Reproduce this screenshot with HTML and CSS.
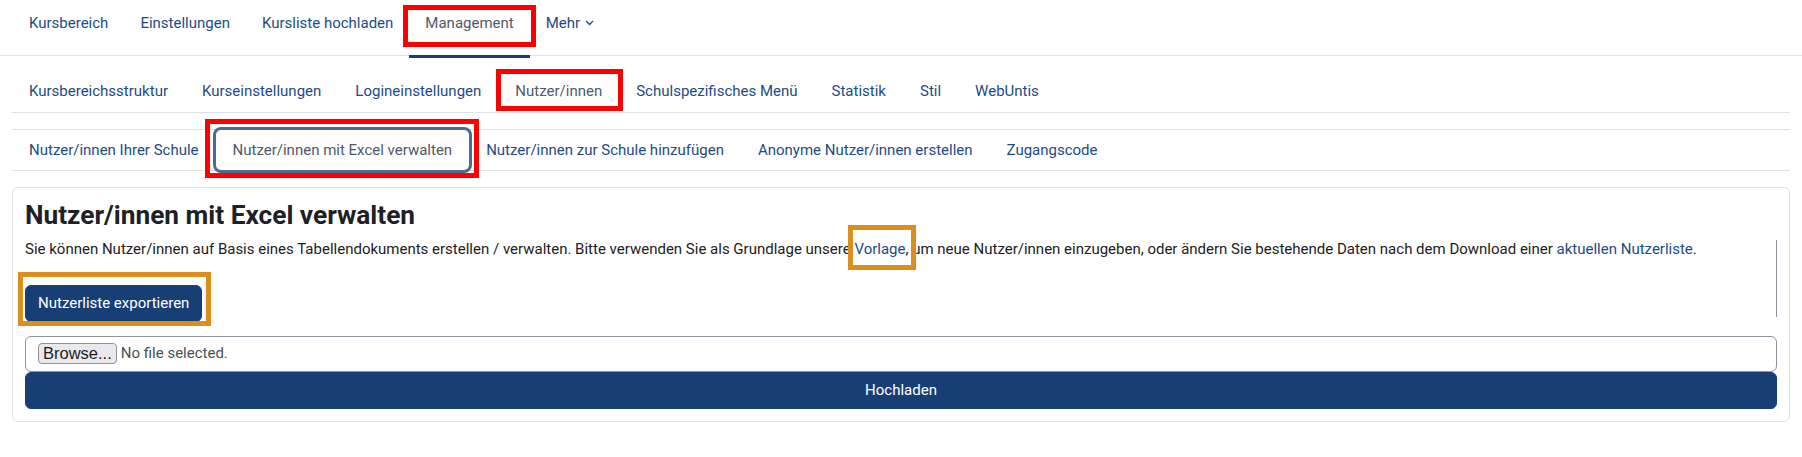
FILE: index.html
```html
<!DOCTYPE html>
<html lang="de">
<head>
    <meta charset="UTF-8">
    <title>Nutzer/innen mit Excel verwalten</title>
    <link rel="stylesheet" href="styles.css">
</head>
<body>
    <header class="topnav">
        <a class="topnav-link" href="#">Kursbereich</a>
        <a class="topnav-link" href="#">Einstellungen</a>
        <a class="topnav-link" href="#">Kursliste hochladen</a>
        <a class="topnav-link active" href="#">Management</a>
        <a class="topnav-link" href="#">Mehr <svg class="chevron" width="9" height="6" viewBox="0 0 9 6"><path d="M1 1l3.5 3.5L8 1" fill="none" stroke="currentColor" stroke-width="1.3"/></svg></a>
    </header>

    <main class="page">
        <nav class="subnav">
            <a class="subnav-link" href="#">Kursbereichsstruktur</a>
            <a class="subnav-link" href="#">Kurseinstellungen</a>
            <a class="subnav-link" href="#">Logineinstellungen</a>
            <a class="subnav-link active" href="#">Nutzer/innen</a>
            <a class="subnav-link" href="#">Schulspezifisches Menü</a>
            <a class="subnav-link" href="#">Statistik</a>
            <a class="subnav-link" href="#">Stil</a>
            <a class="subnav-link" href="#">WebUntis</a>
        </nav>

        <nav class="tabs">
            <a class="tab-link" href="#">Nutzer/innen Ihrer Schule</a>
            <a class="tab-link active" href="#">Nutzer/innen mit Excel verwalten</a>
            <a class="tab-link" href="#">Nutzer/innen zur Schule hinzufügen</a>
            <a class="tab-link" href="#">Anonyme Nutzer/innen erstellen</a>
            <a class="tab-link" href="#">Zugangscode</a>
        </nav>

        <section class="card">
            <h2 class="card-title">Nutzer/innen mit Excel verwalten</h2>
            <div class="intro">
                <p>Sie können Nutzer/innen auf Basis eines Tabellendokuments erstellen / verwalten. Bitte verwenden Sie als Grundlage unsere <a href="#">Vorlage</a>, um neue Nutzer/innen einzugeben, oder ändern Sie bestehende Daten nach dem Download einer <a href="#">aktuellen Nutzerliste</a>.</p>
                <button class="btn">Nutzerliste exportieren</button>
            </div>
            <form class="upload">
                <div class="file-field">
                    <span class="file-btn">Browse...</span>
                    <span class="file-name">No file selected.</span>
                </div>
                <button class="btn btn-block" type="button">Hochladen</button>
            </form>
        </section>
    </main>

    <!-- markup boxes drawn over the screenshot -->
    <div class="mark mark-red" style="left:403px; top:5px; width:133px; height:42px;"></div>
    <div class="mark mark-red" style="left:496px; top:69px; width:127px; height:42px;"></div>
    <div class="mark mark-red" style="left:205px; top:119px; width:274px; height:59px;"></div>
    <div class="mark mark-orange" style="left:848px; top:225px; width:68px; height:45px;"></div>
    <div class="mark mark-orange" style="left:18px; top:272px; width:193px; height:54px;"></div>
</body>
</html>
```

FILE: styles.css
```css
body {
    margin: 0;
    font-family: Roboto, "Helvetica Neue", Arial, sans-serif;
    font-size: 15px;
    line-height: 22.5px;
    color: #1d2125;
    background: #fff;
    position: relative;
}

a {
    color: #1c4c87;
    text-decoration: none;
}

/* top navigation */
.topnav {
    display: flex;
    padding-left: 13px;
    height: 55px;
    border-bottom: 1px solid #dee2e6;
}

.topnav-link {
    padding: 12px 16px 0;
    height: 43px;
    border-bottom: 3px solid transparent;
    margin-bottom: -1px;
}

.topnav-link.active {
    color: #4f5a69;
    border-bottom-color: #173f76;
}

.chevron {
    margin-left: 1px;
    vertical-align: 2px;
}

.page {
    padding: 0 12px;
}

/* second level */
.subnav {
    display: flex;
    margin-top: 15px;
    border-bottom: 1px solid #dee2e6;
}

.subnav-link {
    padding: 8px 16px;
    border: 1px solid transparent;
}

.subnav-link.active {
    color: #4f5a69;
}

/* tabs */
.tabs {
    display: flex;
    margin-top: 16px;
    border-top: 1px solid #dee2e6;
    border-bottom: 1px solid #dee2e6;
}

.tab-link {
    padding: 8px 16px;
    border: 1px solid transparent;
}

.tab-link.active {
    color: #4f5a69;
    border-radius: 5px;
    box-shadow: 0 0 0 3px #4e6a90;
}

/* card */
.card {
    margin-top: 16px;
    border: 1px solid #dee2e6;
    border-radius: 6px;
    padding: 12px;
}

.card-title {
    margin: 0 0 6px;
    font-size: 26.25px;
    line-height: 31.5px;
    font-weight: 700;
}

.intro {
    position: relative;
}

.intro::after {
    content: '';
    position: absolute;
    right: 0;
    top: 2px;
    bottom: 5px;
    border-right: 1px solid #8f959e;
}

.intro p {
    margin: 0 0 25px;
}

.btn {
    font-family: inherit;
    font-size: 15px;
    line-height: 22.5px;
    color: #fff;
    background: #173f76;
    border: 1px solid #173f76;
    border-radius: 6px;
    padding: 6px 12px;
    cursor: pointer;
}

.upload {
    margin-top: 14px;
}

.file-field {
    display: flex;
    align-items: center;
    gap: 4px;
    height: 34px;
    padding-left: 12px;
    border: 1px solid #8f959e;
    border-radius: 6px;
}

.file-btn {
    font-family: "Liberation Sans", Arial, sans-serif;
    font-size: 16.5px;
    line-height: 19px;
    color: #1d1d1d;
    background: #e9e9ed;
    border: 1px solid #8f8f9d;
    border-radius: 4px;
    padding: 0 4px;
}

.file-name {
    color: #4b5057;
}

.btn-block {
    display: block;
    width: 100%;
    height: 37px;
}

/* annotation frames */
.mark {
    position: absolute;
    box-sizing: border-box;
    border: 5px solid;
}

.mark-red {
    border-color: #ff0000;
}

.mark-orange {
    border-color: #dc8e1d;
}
```
